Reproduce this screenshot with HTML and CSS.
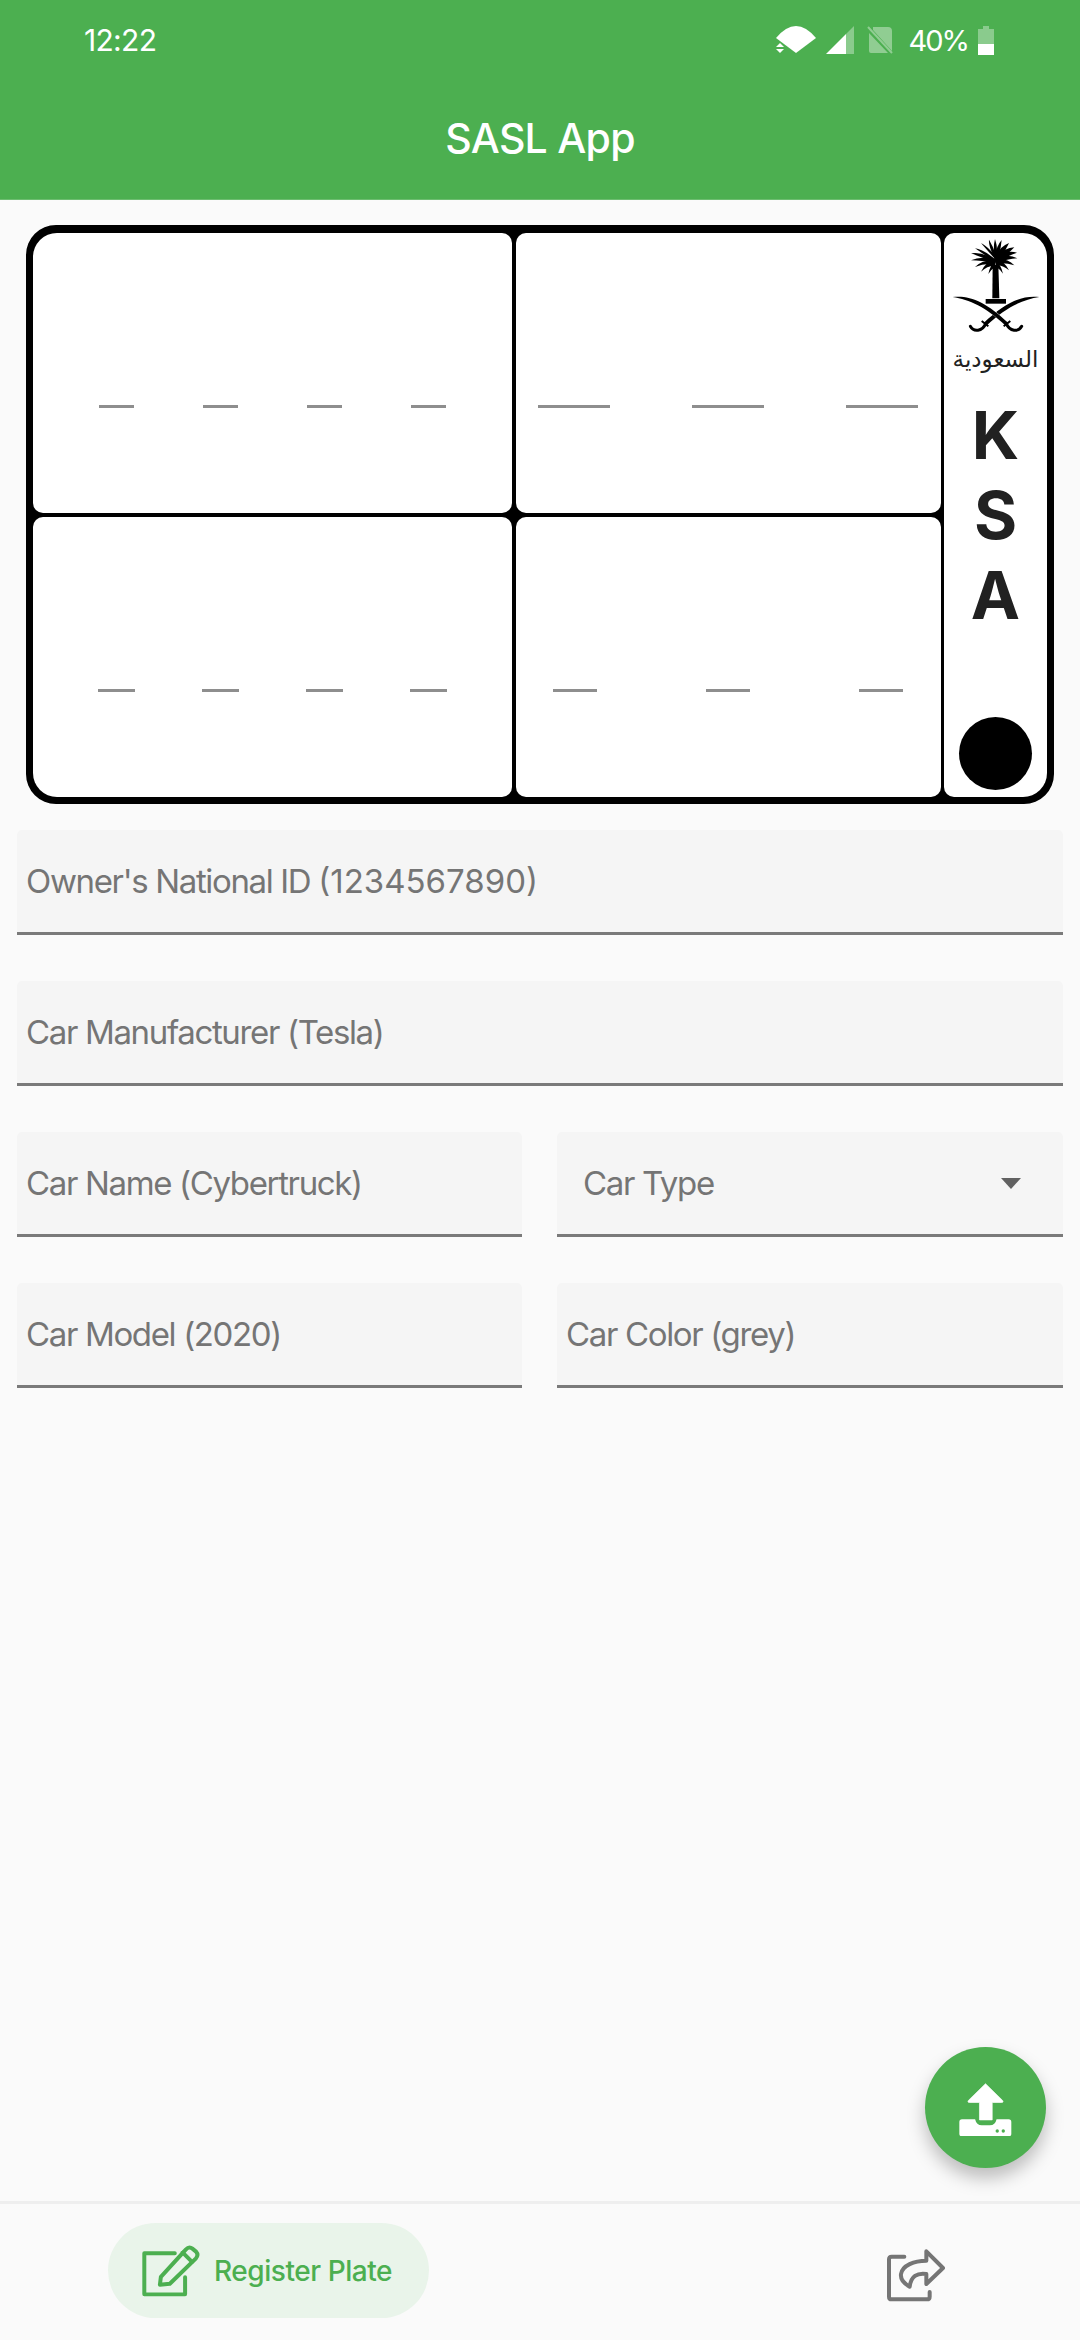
FILE: index.html
```html
<!DOCTYPE html>
<html lang="en">
<head>
<meta charset="utf-8">
<title>SASL App</title>
<link rel="stylesheet" href="styles.css">
</head>
<body>
<div class="screen">
  <header class="appbar">
    <div class="status">
      <span class="time">12:22</span>
      <div class="status-icons">
        <svg class="ic-wifi" viewBox="0 0 40 28"><path d="M0 12Q20 -12 40 12L20 27Z" fill="#fff"/><path d="M0 21L4 17L8 21ZM0 23H8L4 27Z" fill="#fff"/></svg>
        <svg class="ic-signal" viewBox="0 0 28 28"><path d="M0 28L20 8V28Z" fill="#fff"/><path d="M20 8L28 0V28H20Z" fill="#fff" opacity=".35"/></svg>
        <svg class="ic-sim" viewBox="0 0 26 28"><path d="M6 1H21Q25 1 25 5V25L6 4ZM2 7L21 27H4Q2 27 2 25Z" fill="#fff" opacity=".38"/><path d="M1 1L25 27" stroke="#fff" stroke-width="2" opacity=".38"/></svg>
        <span class="pct">40%</span>
        <svg class="ic-batt" viewBox="0 0 16 29"><path d="M5 0H11V3H16V18H0V3H5Z" fill="#fff" opacity=".35"/><path d="M0 18H16V29H0Z" fill="#fff"/></svg>
      </div>
    </div>
    <h1 class="title">SASL App</h1>
  </header>

  <main class="content">
    <section class="plate">
      <div class="cell cell-tl"><span class="dashes d-tl"><i></i><i></i><i></i><i></i></span></div>
      <div class="cell cell-tr"><span class="dashes d-tr"><i></i><i></i><i></i></span></div>
      <div class="side">
        <svg class="emblem" viewBox="150 85 270 290">
          <g fill="#000">
            <path d="M282 150Q275 115 282 88Q292 115 286 150Z"/>
            <path d="M280 150Q285 110 302 91Q300 120 288 152Z"/>
            <path d="M280 150Q295 110 324 100Q312 128 288 155Z"/>
            <path d="M280 150Q305 115 340 113Q320 135 288 156Z"/>
            <path d="M280 148Q315 118 348 129Q320 138 288 158Z"/>
            <path d="M280 148Q320 130 349 146Q320 148 286 160Z"/>
            <path d="M280 150Q315 142 340 167Q312 158 286 162Z"/>
            <path d="M282 150Q310 152 324 182Q304 165 286 168Z"/>
            <path d="M282 152Q300 165 306 192Q296 178 286 172Z"/>
            <path d="M284 150Q262 112 264 90Q280 115 288 150Z"/>
            <path d="M284 150Q250 112 240 100Q268 115 290 150Z"/>
            <path d="M284 150Q245 118 222 116Q250 135 284 158Z"/>
            <path d="M284 150Q240 125 210 131Q240 142 280 158Z"/>
            <path d="M284 150Q240 138 210 152Q240 152 280 160Z"/>
            <path d="M284 152Q245 148 222 172Q250 160 280 164Z"/>
            <path d="M284 152Q255 155 240 186Q258 168 280 168Z"/>
            <path d="M284 152Q268 165 262 193Q272 178 282 172Z"/>
            <path d="M275 165H292L295 266H274Z"/>
            <path d="M254 268H315V282H254Z"/>
          </g>
          <g>
            <path d="M415 262C365 256 315 276 248 340L256 348C315 292 365 270 415 262Z" fill="#000"/>
            <path d="M254 342C244 366 218 368 208 350" fill="none" stroke="#000" stroke-width="9" stroke-linecap="round"/>
            <path d="M262 350L242 334" stroke="#000" stroke-width="6"/>
          </g>
          <path d="M262 296L306 332" stroke="#fff" stroke-width="13"/>
          <g>
            <path d="M155 262C205 256 255 276 322 340L314 348C255 292 205 270 155 262Z" fill="#000"/>
            <path d="M316 342C326 366 352 368 362 350" fill="none" stroke="#000" stroke-width="9" stroke-linecap="round"/>
            <path d="M308 350L328 334" stroke="#000" stroke-width="6"/>
          </g>
        </svg>
        <span class="country" lang="ar" dir="rtl">السعودية</span>
        <div class="letters"><b>K</b><b>S</b><b>A</b></div>
        <span class="hole"></span>
      </div>
      <div class="cell cell-bl"><span class="dashes d-bl"><i></i><i></i><i></i><i></i></span></div>
      <div class="cell cell-br"><span class="dashes d-br"><i></i><i></i><i></i></span></div>
    </section>

    <form class="form">
      <div class="field field-wide"><span>Owner's National ID <span class="digits">(1234567890)</span></span></div>
      <div class="field field-wide"><span>Car Manufacturer (Tesla)</span></div>
      <div class="field"><span>Car Name (Cybertruck)</span></div>
      <div class="field field-select"><span>Car Type</span><i class="caret"></i></div>
      <div class="field"><span>Car Model (2020)</span></div>
      <div class="field"><span>Car Color (grey)</span></div>
    </form>
  </main>

  <button class="fab" type="button" aria-label="Upload">
    <svg class="fab-icon" viewBox="230 176 170 170">
      <path d="M315 190L366 240Q370 246 362 246H335V298H297V246H268Q260 246 264 240Z" fill="#fff" stroke="#fff" stroke-width="2" stroke-linejoin="round"/>
      <path d="M245 296H284Q288 314 304 314H328Q344 314 348 296H384Q392 296 392 304V340Q392 347 384 347H245Q237 347 237 340V304Q237 296 245 296Z" fill="#fff"/>
      <circle cx="350" cy="331" r="5" fill="#4CAF50"/>
      <circle cx="368" cy="331" r="5" fill="#4CAF50"/>
    </svg>
  </button>

  <nav class="bottom">
    <div class="pill">
      <svg class="ic-edit" viewBox="180 165 190 170" fill="none" stroke="#4CAF50" stroke-width="12" stroke-linejoin="round" stroke-linecap="round">
        <path d="M285 198H193V322H316V270"/>
        <path d="M240 293L243 269L318 187Q328 176 338 184L349 193Q358 203 348 214L270 290Z"/>
        <path d="M309 196L337 224"/>
      </svg>
      <span class="pill-label">Register Plate</span>
    </div>
    <svg class="ic-share" viewBox="75 80 180 165" fill="none" stroke="#757575" stroke-width="12" stroke-linejoin="round" stroke-linecap="round">
      <path d="M130 106H92Q84 106 84 114V226Q84 234 92 234H198Q206 234 206 226V212"/>
      <path d="M196 90L246 140L196 188V158C168 154 150 165 146 196C128 186 118 172 120 158C124 132 160 118 196 118Z"/>
    </svg>
  </nav>
</div>
</body>
</html>
```

FILE: styles.css
```css
* { box-sizing: border-box; }
html, body { margin: 0; padding: 0; }
body { width: 1080px; height: 2340px; background: #fafafa; font-family: Inter, "Noto Sans", sans-serif; overflow: hidden; }
.screen { position: relative; width: 1080px; height: 2340px; display: flex; flex-direction: column; }

.appbar { height: 200px; background: #4caf50; border-bottom: 1px solid #6dbd70; color: #fff; display: flex; flex-direction: column; }
.status { height: 80px; padding: 0 86px 0 84px; display: flex; align-items: center; justify-content: space-between; }
.time { font-size: 30px; line-height: 80px; letter-spacing: -.7px; }
.status-icons { display: flex; align-items: center; }
.ic-wifi { width: 40px; height: 28px; margin-right: 10px; }
.ic-signal { width: 28px; height: 28px; margin-right: 13px; }
.ic-sim { width: 26px; height: 28px; margin-right: 15px; }
.pct { font-size: 29px; letter-spacing: -2px; margin-right: 10px; }
.ic-batt { width: 16px; height: 29px; }
.title { margin: 0; flex: 1; display: flex; align-items: center; justify-content: center; font-size: 41px; font-weight: 500; letter-spacing: -.75px; padding-bottom: 3px; }

.content { flex: 1; padding: 25px 17px 0; }

.plate { margin: 0 9px; height: 579px; background: #000; border: 7px solid #000; border-top-width: 8px; border-radius: 30px; display: grid; grid-template-columns: 479px 425px 103px; grid-template-rows: 280px 280px; column-gap: 3.5px; row-gap: 4px; }
.cell { background: #fff; border-radius: 10px; display: flex; align-items: center; justify-content: center; padding-top: 67px; }
.cell-tl { border-top-left-radius: 24px; }
.cell-bl { border-bottom-left-radius: 24px; grid-column: 1; grid-row: 2; }
.cell-br { grid-column: 2; grid-row: 2; }
.dashes { display: flex; }
.dashes i { display: block; height: 3px; background: #8e8e8e; }
.d-tl { gap: 69px; } .d-tl i { width: 35px; }
.d-bl { gap: 67px; } .d-bl i { width: 37px; }
.d-tr { gap: 82px; } .d-tr i { width: 72px; }
.d-br { gap: 109px; } .d-br i { width: 44px; }

.side { grid-column: 3; grid-row: 1 / span 2; background: #fff; border-radius: 10px 24px 24px 10px; display: flex; flex-direction: column; align-items: center; padding-top: 5px; }
.emblem { width: 90px; height: 96.7px; flex: none; }
.country { font-family: "DejaVu Sans", sans-serif; font-size: 23px; line-height: 30px; margin-top: 9px; color: #212121; }
.letters { margin-top: 37px; display: flex; flex-direction: column; gap: 32px; align-items: center; }
.letters b { font-size: 66px; line-height: 48px; height: 48px; color: #212121; font-weight: 700; }
.hole { width: 73px; height: 73px; border-radius: 50%; background: #000; margin-top: auto; margin-bottom: 7px; }

.form { margin-top: 26px; display: grid; grid-template-columns: 505px 506px; column-gap: 35px; row-gap: 46px; }
.field { height: 105px; background: #f5f5f5; border-bottom: 3px solid #7a7a7a; border-radius: 5px 5px 0 0; padding: 0 9px; display: flex; align-items: center; justify-content: space-between; font-size: 33px; letter-spacing: -1.35px; color: #757575; }
.digits { letter-spacing: 0; }
.field-wide { grid-column: 1 / span 2; }
.field-select { padding-left: 26px; padding-right: 42px; }
.caret { width: 0; height: 0; border-left: 10.5px solid transparent; border-right: 10.5px solid transparent; border-top: 11px solid #616161; }

.fab { position: absolute; left: 925px; top: 2047px; width: 121px; height: 121px; border: 0; padding: 0; border-radius: 50%; background: #4caf50; box-shadow: 0 10px 18px rgba(0,0,0,.25); display: flex; align-items: center; justify-content: center; }
.fab-icon { width: 57px; height: 57px; }

.bottom { height: 139px; border-top: 3px solid #eeeeee; padding: 19px 0 0 108px; display: flex; align-items: flex-start; }
.pill { width: 321px; height: 95px; border-radius: 48px; background: #e9f4ea; display: flex; align-items: center; padding-left: 32px; }
.ic-edit { width: 63px; height: 57px; flex: none; }
.pill-label { margin-left: 11px; font-size: 28px; font-weight: 500; letter-spacing: -.45px; color: #4caf50; }
.ic-share { width: 60px; height: 55px; margin: 25px 0 0 457px; flex: none; }
```
